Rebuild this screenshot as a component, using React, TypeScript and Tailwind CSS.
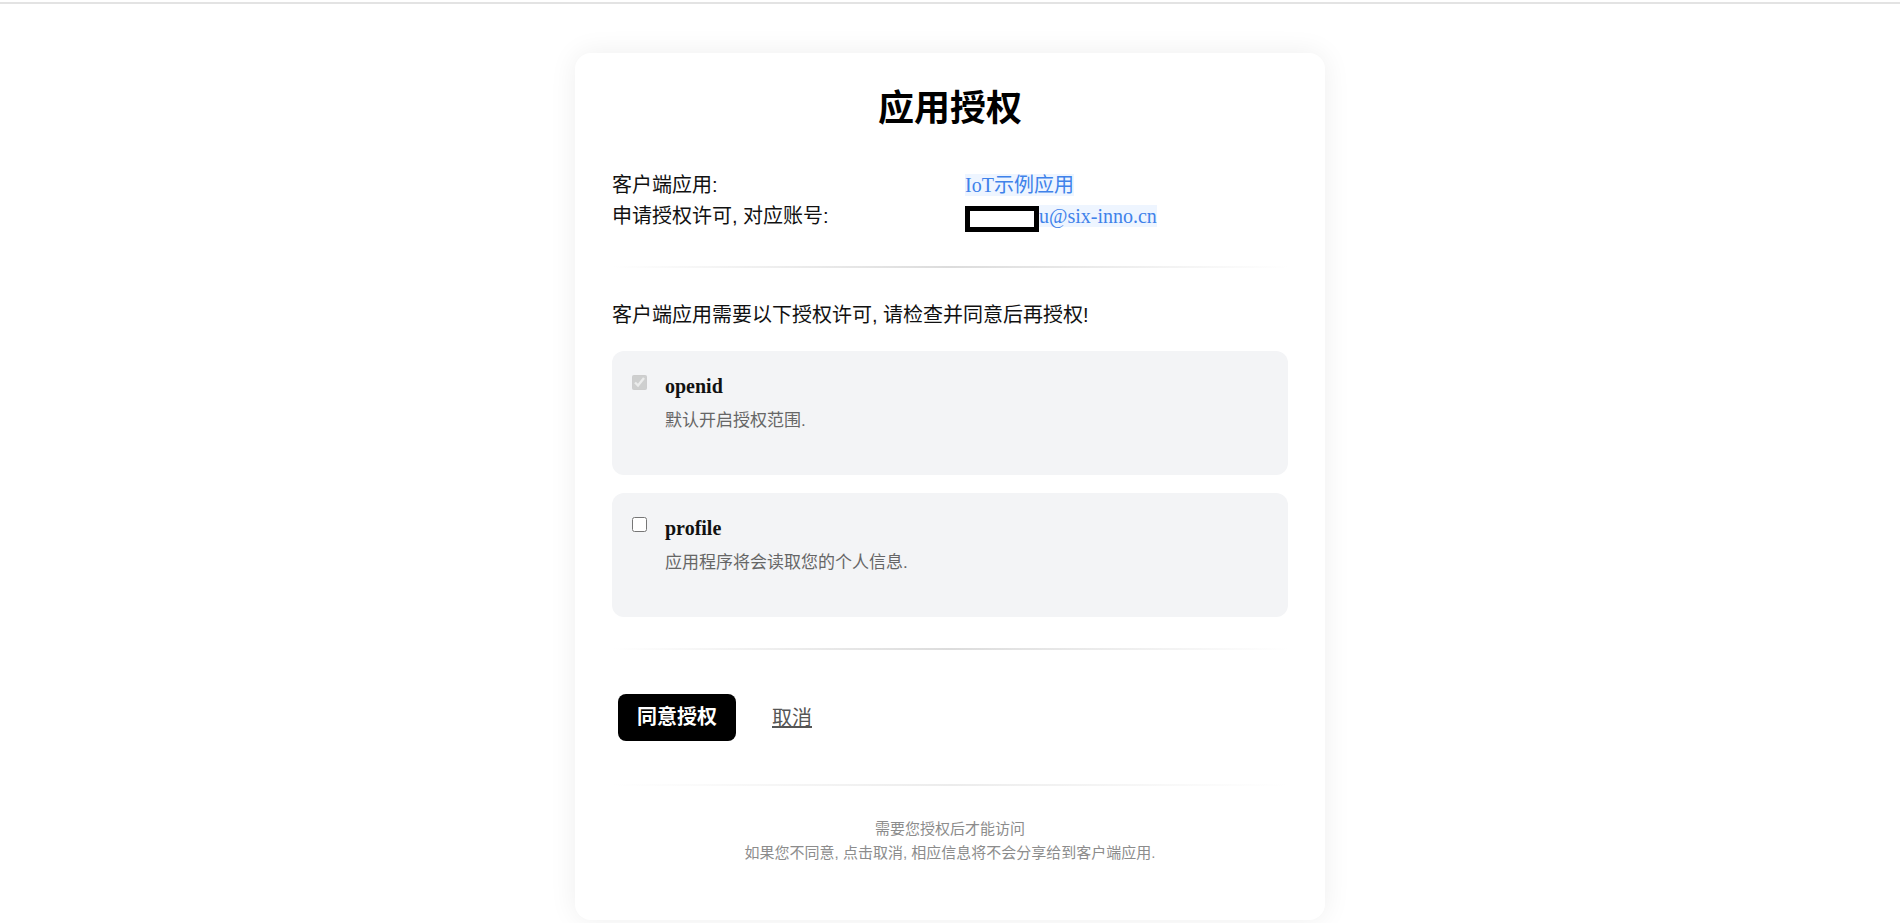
import React from "react";

const sans = "font-['Liberation_Sans','Noto_Sans_CJK_SC',sans-serif]";
const serif = "font-['Liberation_Serif','Noto_Sans_CJK_SC',serif]";

const scopes = [
  { name: "openid", desc: "默认开启授权范围.", fixed: true },
  { name: "profile", desc: "应用程序将会读取您的个人信息.", fixed: false },
];

function Divider({ light }: { light?: boolean }) {
  return (
    <div
      className={`h-[2px] bg-linear-to-r from-transparent to-transparent ${
        light ? "via-[#ececec]" : "via-[#dcdcdc]"
      }`}
    />
  );
}

export default function App() {
  return (
    <div className={`min-h-screen bg-white ${sans}`}>
      <div className="mt-[2px] h-[2px] bg-[#e3e3e3]" />

      <div className="flex justify-center pt-[49px]">
        <div className="w-[750px] rounded-2xl bg-white px-[37px] pt-9 pb-[55px] shadow-[0_0_28px_rgba(0,0,0,0.07)]">
          <h1 className="text-center text-4xl leading-10 font-bold text-black">应用授权</h1>

          {/* 客户端信息 */}
          <div className="mt-[41px] text-xl leading-[31px] text-[#111]">
            <div className="flex">
              <div className="w-[353px]">客户端应用:</div>
              <div className={serif}>
                <span className="bg-[#eef5ff] text-[#3f82ea]">IoT示例应用</span>
              </div>
            </div>
            <div className="flex">
              <div className="w-[353px]">申请授权许可, 对应账号:</div>
              <div className={serif}>
                <span className="inline-block h-[26px] w-[74px] border-[5px] border-black bg-white align-[-9px]" />
                <span className="bg-[#eef5ff] text-[#3f82ea]">u@six-inno.cn</span>
              </div>
            </div>
          </div>

          <div className="mt-[34px]">
            <Divider />
          </div>

          <p className="mt-[32px] text-xl leading-[30px] text-[#111]">
            客户端应用需要以下授权许可, 请检查并同意后再授权!
          </p>

          <div className="mt-[21px] flex flex-col gap-[18px]">
            {scopes.map((s) => (
              <div key={s.name} className="rounded-xl bg-gray-100 px-5 pt-5 pb-[39px]">
                <div className="flex gap-[18px]">
                  <input
                    type="checkbox"
                    defaultChecked={s.fixed}
                    disabled={s.fixed}
                    className="mt-[4px] h-[15px] w-[15px] shrink-0"
                  />
                  <div>
                    <div className={`${serif} text-xl leading-[30px] font-bold text-[#111]`}>
                      {s.name}
                    </div>
                    <div className="mt-[5px] text-[17px] leading-[30px] text-[#666]">{s.desc}</div>
                  </div>
                </div>
              </div>
            ))}
          </div>

          <div className="mt-[31px]">
            <Divider />
          </div>

          <div className="mt-[44px] flex items-center gap-9 pl-[6px]">
            <button className="rounded-lg bg-black px-[19px] text-xl leading-[47px] font-bold text-white">
              同意授权
            </button>
            <button className="text-xl leading-[30px] text-[#555] underline">取消</button>
          </div>

          <div className="mt-[43px]">
            <Divider light />
          </div>

          <div className="mt-[31px] text-center text-[15px] leading-6 text-[#8c8c8c]">
            <p>需要您授权后才能访问</p>
            <p>如果您不同意, 点击取消, 相应信息将不会分享给到客户端应用.</p>
          </div>
        </div>
      </div>
    </div>
  );
}
